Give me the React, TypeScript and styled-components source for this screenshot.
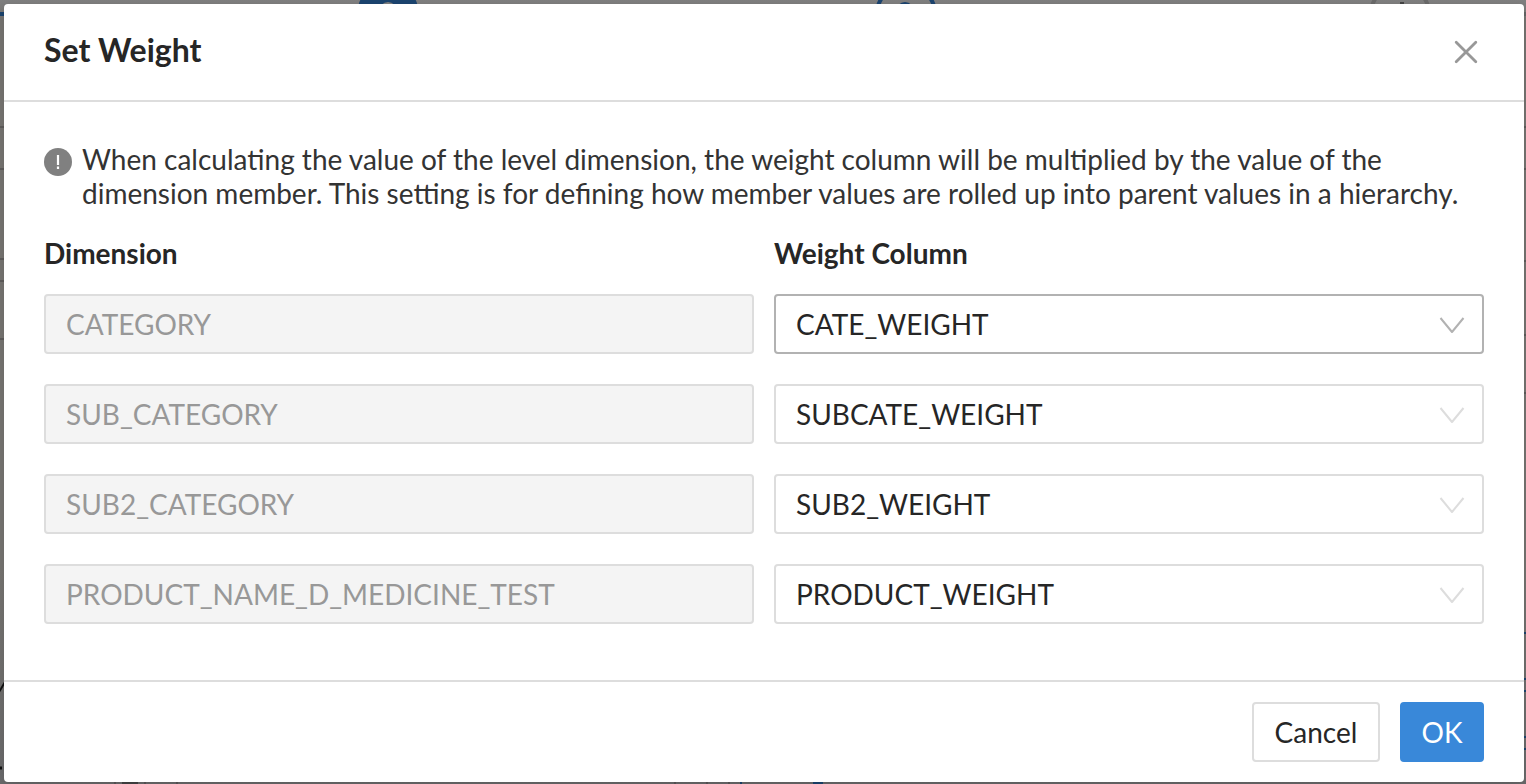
import React, { useState } from "react";
import styled, { createGlobalStyle } from "styled-components";

const GlobalStyle = createGlobalStyle`
  *, *::before, *::after { box-sizing: border-box; }
  html, body { margin: 0; background: #757372; }
  body, input, select, button { font-family: Lato, "Liberation Sans", sans-serif; }
`;

const Page = styled.div`
  position: relative;
  min-height: 100vh;
  padding: 4px 2px 2px 4px;
  display: flex;
  overflow: hidden;
  background: linear-gradient(to bottom, #808080 0, #777572 20px, #777572 72%, #6b6b6c 100%);
`;

const Backdrop = styled.svg`
  position: absolute;
  left: 0;
  top: 0;
`;

const Dialog = styled.section`
  position: relative;
  flex: 1;
  min-width: 0;
  display: flex;
  flex-direction: column;
  background: #fff;
  border-radius: 4px;
  box-shadow: 0 4px 12px rgba(0, 0, 0, 0.15);
  color: #262626;
`;

const Header = styled.header`
  display: flex;
  align-items: center;
  justify-content: space-between;
  height: 98px;
  padding: 0 40px;
  border-bottom: 2px solid #ddd;
`;

const Title = styled.h1`
  margin: 0;
  padding-bottom: 4px;
  font-size: 32px;
  line-height: 40px;
  font-weight: 700;
`;

const CloseButton = styled.button`
  display: flex;
  padding: 6px;
  border: 0;
  background: none;
  color: #989898;
`;

const Body = styled.div`
  flex: 1;
  padding: 40px;
`;

const Notice = styled.div`
  display: flex;
  gap: 10px;
  font-size: 28px;
  line-height: 34px;
  color: #333;

  svg { flex: none; margin-top: 6px; }
  p { margin: 0; }
`;

const Grid = styled.div`
  display: grid;
  grid-template-columns: 1fr 1fr;
  gap: 30px 20px;
  margin-top: 24px;
`;

const ColumnTitle = styled.h2`
  margin: 0 0 -8px;
  font-size: 28px;
  line-height: 38px;
  font-weight: 700;
`;

const DimensionInput = styled.input`
  width: 100%;
  height: 60px;
  padding: 0 20px;
  border: 2px solid #ddd;
  border-radius: 4px;
  background: #f4f4f4;
  color: #989898;
  font-size: 28px;
`;

const SelectBox = styled.div<{ $active: boolean }>`
  display: grid;
  align-items: center;
  border: 2px solid ${(p) => (p.$active ? "#b2b2b2" : "#ddd")};
  border-radius: 4px;
  color: ${(p) => (p.$active ? "#b2b2b2" : "#ddd")};
  height: 60px;

  > * { grid-area: 1 / 1; }
  svg { justify-self: end; margin-right: 16px; pointer-events: none; }
`;

const Select = styled.select`
  width: 100%;
  height: 56px;
  padding: 0 60px 0 20px;
  border: 0;
  outline: 0;
  appearance: none;
  background: transparent;
  color: #262626;
  font-size: 28px;
`;

const Footer = styled.footer`
  display: flex;
  justify-content: flex-end;
  gap: 20px;
  padding: 20px 40px;
  border-top: 2px solid #ddd;
`;

const Button = styled.button<{ $primary?: boolean }>`
  height: 60px;
  min-width: ${(p) => (p.$primary ? "84px" : "128px")};
  padding: 0 16px;
  border: 2px solid ${(p) => (p.$primary ? "#3988d9" : "#ddd")};
  border-radius: 4px;
  background: ${(p) => (p.$primary ? "#3988d9" : "#fff")};
  color: ${(p) => (p.$primary ? "#fff" : "#262626")};
  font-size: 28px;
`;

const rows = [
  ["CATEGORY", "CATE_WEIGHT"],
  ["SUB_CATEGORY", "SUBCATE_WEIGHT"],
  ["SUB2_CATEGORY", "SUB2_WEIGHT"],
  ["PRODUCT_NAME_D_MEDICINE_TEST", "PRODUCT_WEIGHT"],
];
const columns = rows.map(([, column]) => column);

const Chevron = () => (
  <svg width="28" height="20" viewBox="0 0 28 20" fill="none" stroke="currentColor" strokeWidth="2" aria-hidden="true">
    <path d="M2.5 4 14 18 25.5 4" strokeLinejoin="round" />
  </svg>
);

export default function App() {
  const [weights, setWeights] = useState(columns);

  return (
    <>
      <GlobalStyle />
      <Page>
        <Backdrop width="1526" height="784" aria-hidden="true">
          <path d="M0 14H1000" stroke="#1b446f" strokeWidth="4" />
          <path d="M1500 14H1526" stroke="#666" strokeWidth="4" />
          <circle cx="388" cy="14" r="31" fill="#1b446f" />
          <circle cx="388" cy="11" r="9" fill="#808080" />
          <circle cx="906" cy="14" r="29" fill="none" stroke="#1b446f" strokeWidth="4" />
          <circle cx="905" cy="11" r="9" fill="#1b446f" />
          <circle cx="1400" cy="14" r="29" fill="none" stroke="#6a6a6a" strokeWidth="4" />
          <path d="M1400 3H1404" stroke="#444" strokeWidth="2" />
          <path
            d="M0 127H4M0 169H4M0 259H4M0 281H4M0 339H4M1524 127H1526M1524 169H1526M1524 261H1526M1524 335H1526M1524 393H1526"
            stroke="#5f5d5c"
            strokeWidth="2"
          />
          <path d="M-1 692 5 682" stroke="#111" strokeWidth="2" />
          <path d="M0 768H2" stroke="#111" strokeWidth="3" />
          <path d="M1524 633H1526M1524 679H1526M1524 691H1526M1524 737H1526M1524 749H1526" stroke="#1b446f" strokeWidth="2" />
          <path d="M122 783H138" stroke="#444" strokeWidth="2" />
          <path d="M114 783H116M144 783H146M176 783H178M674 783H676M706 783H708M728 783H730" stroke="#5a5859" strokeWidth="2" />
          <path d="M740 783H742M813 783H823" stroke="#1b446f" strokeWidth="2" />
        </Backdrop>
        <Dialog role="dialog" aria-labelledby="dialog-title">
          <Header>
            <Title id="dialog-title">Set Weight</Title>
            <CloseButton type="button" aria-label="Close">
              <svg width="24" height="24" viewBox="0 0 24 24" stroke="currentColor" strokeWidth="2.8" strokeLinecap="round">
                <path d="M2.2 2.2 21.8 21.8M21.8 2.2 2.2 21.8" />
              </svg>
            </CloseButton>
          </Header>
          <Body>
            <Notice>
              <svg width="28" height="28" viewBox="0 0 28 28" aria-hidden="true">
                <circle cx="14" cy="14" r="14" fill="#808080" />
                <path d="M14 7V17M14 18.6V21" stroke="#fff" strokeWidth="2.2" />
              </svg>
              <p>
                When calculating the value of the level dimension, the weight column will be multiplied by the value of
                the dimension member. This setting is for defining how member values are rolled up into parent values
                in a hierarchy.
              </p>
            </Notice>
            <Grid>
              <ColumnTitle id="dimension-title">Dimension</ColumnTitle>
              <ColumnTitle id="weight-title">Weight Column</ColumnTitle>
              {rows.map(([dimension], i) => (
                <React.Fragment key={dimension}>
                  <DimensionInput aria-labelledby="dimension-title" value={dimension} disabled readOnly />
                  <SelectBox $active={i === 0}>
                    <Select
                      aria-labelledby="weight-title"
                      value={weights[i]}
                      onChange={(e) => setWeights(weights.map((w, j) => (j === i ? e.target.value : w)))}
                    >
                      {columns.map((column) => (
                        <option key={column}>{column}</option>
                      ))}
                    </Select>
                    <Chevron />
                  </SelectBox>
                </React.Fragment>
              ))}
            </Grid>
          </Body>
          <Footer>
            <Button type="button">Cancel</Button>
            <Button type="button" $primary>OK</Button>
          </Footer>
        </Dialog>
      </Page>
    </>
  );
}
